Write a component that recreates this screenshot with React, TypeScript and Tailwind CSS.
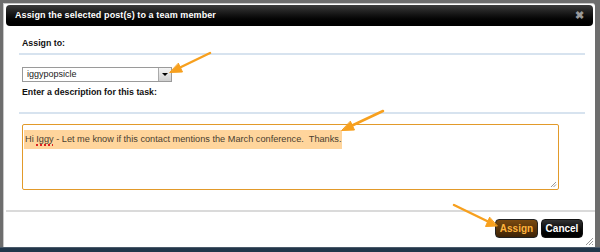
import React from "react";

const font = { fontFamily: '"Liberation Sans", Arial, sans-serif' };

function Arrows() {
  return (
    <svg className="absolute inset-0 pointer-events-none" width={600} height={252}>
      <g stroke="#f7a01e" strokeWidth={2.5} strokeLinecap="round" fill="#f7a01e">
        <line x1={210} y1={53} x2={178} y2={68.5} />
        <polygon points="170,72.5 182.5,72 178.5,63.5" strokeWidth={1} />
        <line x1={383} y1={111} x2={350} y2={126.5} />
        <polygon points="342,130.5 354.5,130 350.5,121.5" strokeWidth={1} />
        <line x1={454} y1={205} x2={489} y2={222} />
        <polygon points="497,226 485.5,226.5 489.5,217.5" strokeWidth={1} />
      </g>
    </svg>
  );
}

export default function App() {
  return (
    <div className="relative w-[600px] h-[252px] bg-[#6d6d6d] overflow-hidden flex flex-col" style={font}>
      <div className="flex-1 flex pt-[3px] pl-[3px] pr-[5px]">
        <div className="flex-1 flex flex-col bg-white border-l border-t border-[#c8c8c8] rounded-tr-[3px]">
          {/* title bar */}
          <div className="mx-[2px] mt-[1px] h-[21px] rounded-[4px] bg-gradient-to-b from-[#3c3c3c] via-[#111] to-black flex items-center justify-between pl-[9px] pr-[9px]">
            <span className="text-white font-bold text-[9px] tracking-[0.1px]">Assign the selected post(s) to a team member</span>
            <span className="text-[#9a9a9a] font-bold text-[11px] leading-none">✖</span>
          </div>

          <div className="pl-[15px] pr-[10px]">
            <div className="mt-[11px] pl-[3px] h-[14px] flex items-center text-[8.8px] font-bold text-[#111]">Assign to:</div>
            <div className="mt-[2px] h-[2px] bg-[#d7e3ef]" />

            <div className="mt-[12px] ml-[3px] w-[150px] h-[15px] border border-[#9a9a9a] bg-white flex items-center">
              <span className="flex-1 pl-[4px] text-[9px] text-[#222]">iggypopsicle</span>
              <div className="w-[13px] h-[13px] border-l border-[#aaa] bg-gradient-to-b from-[#f4f4f4] to-[#cfcfcf] flex items-center justify-center">
                <div className="w-0 h-0 border-l-[3px] border-r-[3px] border-t-[3px] border-l-transparent border-r-transparent border-t-black" />
              </div>
            </div>

            <div className="mt-[4px] pl-[3px] h-[14px] flex items-center text-[8.8px] font-bold text-[#111]">Enter a description for this task:</div>
            <div className="mt-[12px] h-[2px] bg-[#d7e3ef]" />

            <div className="mt-[10px] ml-[3px] w-[537px] h-[66px] border-[1.5px] border-[#e29a2a] rounded-[2px] bg-white relative">
              <div className="pl-[1px]">
                <span className="inline-block bg-[#ffd59c] px-[1px] h-[19px] leading-[18px] text-[9.2px] text-[#4a4030] whitespace-pre">
                  Hi <span className="underline decoration-dotted decoration-[#d22] decoration-[1.5px] underline-offset-[2px]">Iggy</span> - Let me know if this contact mentions the March conference.  Thanks.
                </span>
              </div>
              <svg className="absolute right-[1px] bottom-[1px]" width={7} height={7}>
                <path d="M1 6 L6 1 M3.5 6 L6 3.5" stroke="#999" strokeWidth={1} />
              </svg>
            </div>
          </div>

          <div className="mt-[20px] ml-[2px] h-[2px] bg-[#dadada]" />

          <div className="flex-1 flex items-start justify-end gap-[3px] pr-[12px] pt-[7px] relative">
            <button className="h-[19px] w-[43px] rounded-[4px] bg-gradient-to-b from-[#7a4a10] to-[#3e2306] border border-[#222] text-[#ffb43c] font-bold text-[10px]">Assign</button>
            <button className="h-[19px] w-[42px] rounded-[4px] bg-gradient-to-b from-[#333] to-black border border-[#111] text-white font-bold text-[10px]">Cancel</button>
            <svg className="absolute right-[1px] bottom-[1px]" width={10} height={10}>
              <path d="M2 9 L9 2 M5 9 L9 5 M8 9 L9 8" stroke="#999" strokeWidth={1} />
            </svg>
          </div>
        </div>
      </div>
      <div className="h-[5px] bg-[#22364a] border-t border-[#4a5a6a]" />
      <Arrows />
    </div>
  );
}
